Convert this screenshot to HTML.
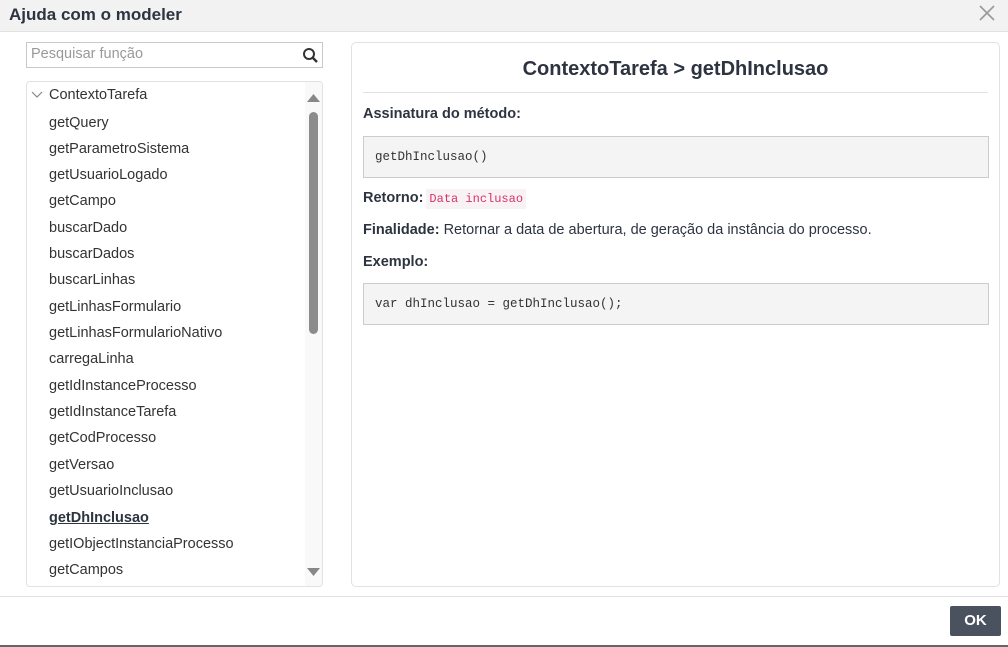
<!DOCTYPE html>
<html><head><meta charset="utf-8"><style>
*{box-sizing:border-box;margin:0;padding:0}
body{width:1008px;height:647px;background:#fff;font-family:"Liberation Sans",sans-serif;color:#333;position:relative;overflow:hidden}
.hdr{position:absolute;left:0;top:0;width:1008px;height:32px;background:#f2f2f2;border-bottom:1px solid #e2e2e2}
.hdr h1{position:absolute;left:9px;top:5px;font-size:17px;font-weight:bold;color:#2d3440}
.close{position:absolute;right:12px;top:4px}
.search{position:absolute;left:26px;top:42px;width:297px;height:26px;border:1px solid #c8c8c8;font-size:14.5px;color:#999;padding:3px 0 0 4px}
.search svg{position:absolute;right:3px;top:4px}
.list{position:absolute;left:26px;top:81px;width:297px;height:506px;border:1px solid #e2e2e2;border-radius:4px;overflow:hidden}
.it{position:absolute;left:22px;font-size:14.5px;color:#333;line-height:18px}
.sb{position:absolute;left:278px;top:0;width:18px;height:504px;background:#f9f9f9}
.thumb{position:absolute;left:282px;top:30px;width:9px;height:222px;background:#8c8c8c;border-radius:5px}
.panel{position:absolute;left:351px;top:42px;width:649px;height:545px;border:1px solid #e2e2e2;border-radius:5px}
.title{position:absolute;left:0;width:100%;top:15px;text-align:center;font-size:20px;font-weight:bold;color:#2d3440}
.hr{position:absolute;left:11px;right:11px;top:49px;border-top:1px solid #e2e2e2}
.lbl{position:absolute;left:11px;font-size:14.5px;color:#2d3440}
.code{position:absolute;left:11px;width:626px;height:42px;background:#f4f4f4;border:1px solid #ccc;font-family:"Liberation Mono",monospace;font-size:12.5px;color:#333;padding:13px 0 0 11px}
.foot{position:absolute;left:0;top:596px;width:1008px;border-top:1px solid #e2e2e2}
.ok{position:absolute;left:950px;top:606px;width:51px;height:30px;background:#4a5260;color:#fff;font-weight:bold;font-size:15px;text-align:center;line-height:30px;border-radius:2px}
.bot{position:absolute;left:0;top:645px;width:1008px;height:2px;background:#666}
</style></head><body>
<div class="hdr"><h1>Ajuda com o modeler</h1>
<svg class="close" width="18" height="18" viewBox="0 0 18 18"><path d="M2 2L16 16M16 2L2 16" stroke="#999" stroke-width="1.6"/></svg></div>
<div class="search">Pesquisar função<svg width="17" height="17" viewBox="0 0 17 17"><circle cx="7" cy="7" r="5" fill="none" stroke="#333" stroke-width="2"/><path d="M10.5 10.5L15 15" stroke="#333" stroke-width="2.4"/></svg></div>
<div class="list">
<svg style="position:absolute;left:4px;top:9px" width="12" height="8" viewBox="0 0 12 8"><path d="M1 1L6 6L11 1" fill="none" stroke="#888" stroke-width="1.2"/></svg>
<div class="it" style="top:4px">ContextoTarefa</div>
<div class="it" style="top:32px">getQuery</div>
<div class="it" style="top:58px">getParametroSistema</div>
<div class="it" style="top:84px">getUsuarioLogado</div>
<div class="it" style="top:110px">getCampo</div>
<div class="it" style="top:137px">buscarDado</div>
<div class="it" style="top:163px">buscarDados</div>
<div class="it" style="top:189px">buscarLinhas</div>
<div class="it" style="top:216px">getLinhasFormulario</div>
<div class="it" style="top:242px">getLinhasFormularioNativo</div>
<div class="it" style="top:268px">carregaLinha</div>
<div class="it" style="top:295px">getIdInstanceProcesso</div>
<div class="it" style="top:321px">getIdInstanceTarefa</div>
<div class="it" style="top:347px">getCodProcesso</div>
<div class="it" style="top:374px">getVersao</div>
<div class="it" style="top:400px">getUsuarioInclusao</div>
<div class="it" style="top:427px;font-weight:bold;text-decoration:underline;color:#2d3440">getDhInclusao</div>
<div class="it" style="top:453px">getIObjectInstanciaProcesso</div>
<div class="it" style="top:479px">getCampos</div>
<div class="sb"></div>
<svg style="position:absolute;left:280px;top:11px" width="13" height="9"><path d="M0 9L6.5 1L13 9Z" fill="#888"/></svg>
<div class="thumb"></div>
<svg style="position:absolute;left:280px;top:486px" width="13" height="9"><path d="M0 0L6.5 8L13 0Z" fill="#888"/></svg>
</div>
<div class="panel">
<div class="title">ContextoTarefa &gt; getDhInclusao</div>
<div class="hr"></div>
<div class="lbl" style="top:63px;font-weight:bold">Assinatura do método:</div>
<div class="code" style="top:93px">getDhInclusao()</div>
<div class="lbl" style="top:147px"><b>Retorno:</b><span style="font-family:'Liberation Mono',monospace;font-size:12px;color:#d6336c;background:#f9f2f4;padding:3px 3px;margin-left:3px">Data inclusao</span></div>
<div class="lbl" style="top:179px"><b>Finalidade:</b> Retornar a data de abertura, de geração da instância do processo.</div>
<div class="lbl" style="top:211px;font-weight:bold">Exemplo:</div>
<div class="code" style="top:240px">var dhInclusao = getDhInclusao();</div>
</div>
<div class="foot"></div>
<div class="ok">OK</div>
<div class="bot"></div>
</body></html>
